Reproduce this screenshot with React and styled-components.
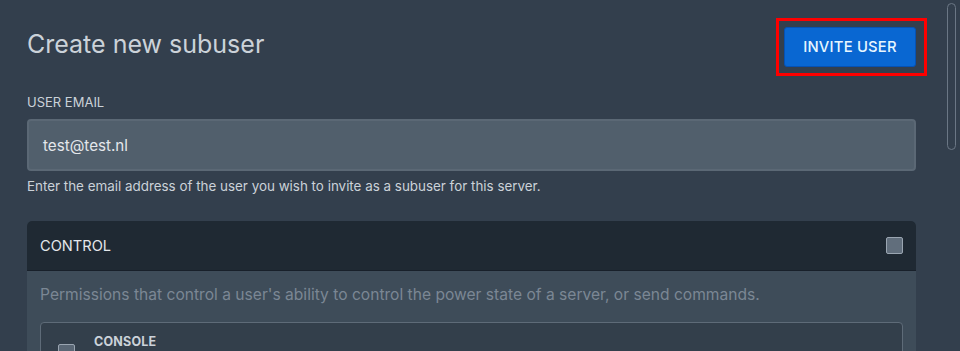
import styled, { createGlobalStyle } from "styled-components";

const GlobalStyle = createGlobalStyle`
  html, body {
    margin: 0;
    padding: 0;
    background: #333f4d;
    overflow: hidden;
  }
  * { box-sizing: border-box; }
  body {
    font-family: Inter, "Noto Sans", sans-serif;
    color: #cbd2d9;
  }
`;

const Page = styled.div`
  position: relative;
  width: 960px;
  height: 351px;
  padding: 27px 44px 0 27px;
`;

const Header = styled.div`
  display: flex;
  align-items: center;
  justify-content: space-between;
  height: 40px;
`;

const Title = styled.h2`
  margin: 0 0 6px;
  font-size: 25px;
  font-weight: 400;
  color: #cbd2d9;
`;

const Highlight = styled.div`
  padding: 6px 8px 6px 5px;
  margin: -9px -11px -9px 0;
  border: 3px solid #ff0000;
`;

const Button = styled.button`
  display: block;
  width: 132px;
  height: 40px;
  background: #0967d2;
  border: 1px solid #0552b5;
  border-radius: 3px;
  color: #e6f6ff;
  font-family: inherit;
  font-size: 14.8px;
  font-weight: 500;
  letter-spacing: 0.2px;
`;

const Field = styled.div`
  margin-top: 26px;
`;

const Label = styled.label`
  display: block;
  font-size: 13px;
  text-transform: uppercase;
  color: #cbd2d9;
  margin-bottom: 8px;
  line-height: 18px;
`;

const Input = styled.div`
  height: 52px;
  background: #515f6c;
  border: 2px solid #5b6875;
  border-radius: 4px;
  padding: 0 14px;
  display: flex;
  align-items: center;
  font-size: 15.2px;
  color: #e4e7eb;
`;

const Help = styled.p`
  margin: 6px 0 0;
  font-size: 13.4px;
  color: #cbd2d9;
  line-height: 18px;
`;

const Card = styled.div`
  margin-top: 26px;
  border-radius: 5px;
  overflow: hidden;
  background: #3e4c59;
`;

const CardHead = styled.div`
  height: 50px;
  background: #1f2933;
  border-bottom: 1px solid #18202a;
  display: flex;
  align-items: center;
  justify-content: space-between;
  padding: 0 13px;
  font-size: 14.6px;
  color: #e4e7eb;
`;

const Check = styled.span`
  display: inline-block;
  width: 17px;
  height: 17px;
  border-radius: 2px;
  background: ${(p) => (p.$muted ? "#5a6775" : "#616e7c")};
  border: 1px solid #9aa5b1;
`;

const CardBody = styled.div`
  padding: 13px 13px 0;
`;

const Desc = styled.p`
  margin: 0 0 16px;
  font-size: 15.6px;
  color: #7b8794;
  line-height: 22px;
`;

const Perm = styled.div`
  border: 1px solid #5e6b78;
  border-radius: 4px;
  background: #333f4b;
  display: flex;
  align-items: flex-start;
  gap: 19px;
  padding: 11px 17px 20px;
`;

const PermCheck = styled(Check)`
  margin-top: 10px;
`;

const PermName = styled.div`
  font-size: 12.5px;
  font-weight: 700;
  color: #cbd2d9;
  letter-spacing: 0.2px;
`;

const Scrollbar = styled.div`
  position: absolute;
  top: 3px;
  right: 4px;
  width: 9px;
  height: 147px;
  border: 1px solid #6b7785;
  border-radius: 5px;
`;

export default function App() {
  return (
    <>
      <GlobalStyle />
      <Page>
        <Header>
          <Title>Create new subuser</Title>
          <Highlight>
            <Button>INVITE USER</Button>
          </Highlight>
        </Header>
        <Field>
          <Label>User Email</Label>
          <Input>test@test.nl</Input>
          <Help>Enter the email address of the user you wish to invite as a subuser for this server.</Help>
        </Field>
        <Card>
          <CardHead>
            <span>CONTROL</span>
            <Check />
          </CardHead>
          <CardBody>
            <Desc>Permissions that control a user's ability to control the power state of a server, or send commands.</Desc>
            <Perm>
              <PermCheck $muted />
              <PermName>CONSOLE</PermName>
            </Perm>
          </CardBody>
        </Card>
        <Scrollbar />
      </Page>
    </>
  );
}
